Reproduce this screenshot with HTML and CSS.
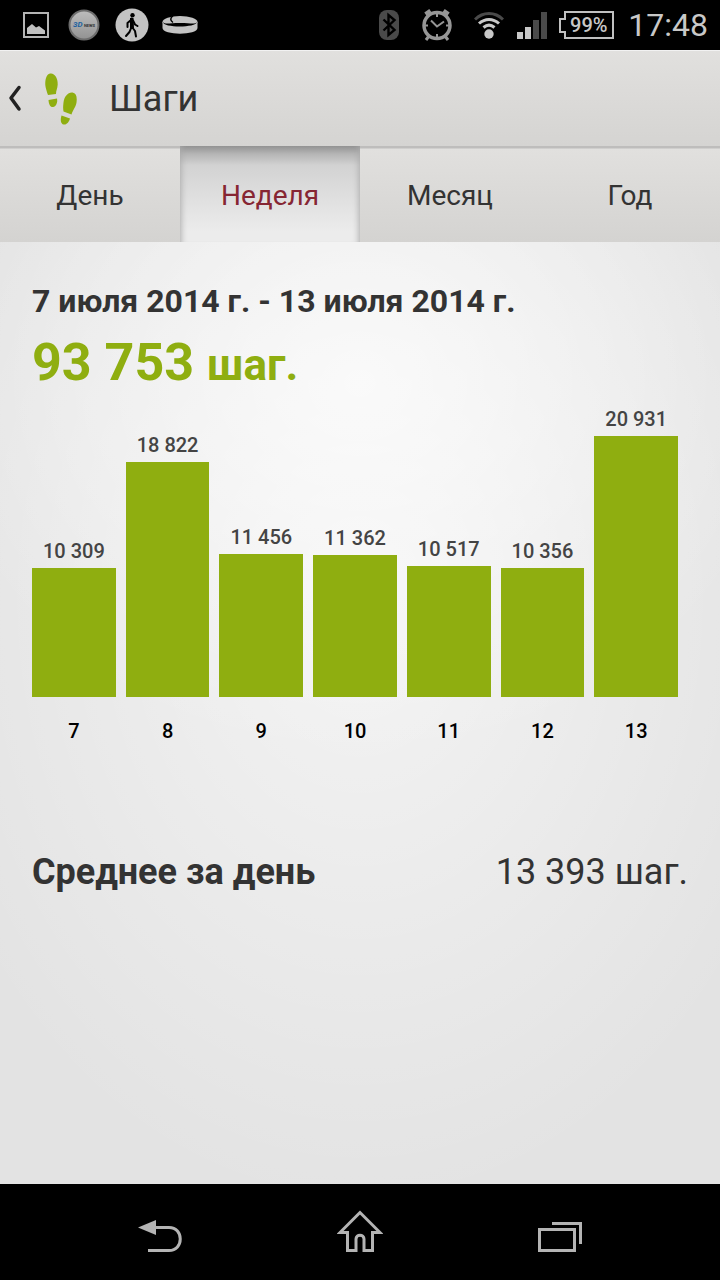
FILE: index.html
```html
<!DOCTYPE html>
<html lang="ru">
<head>
  <meta charset="UTF-8" />
  <meta name="viewport" content="width=device-width, initial-scale=1.0" />
  <title>Шаги</title>
  <link rel="stylesheet" href="styles.css">
</head>
<body>

  <div class="status-bar">
    <div class="status-icons">
      <span class="status-cell">
        <svg width="26" height="26" viewBox="0 0 26 26">
          <rect x="1" y="1" width="24" height="24" fill="none" stroke="#b4b4b4" stroke-width="2"/>
          <path d="M4 22v-6l5-4 4 3.500 3-1.500 6 4.500V22z" fill="#c0c0c0"/>
        </svg>
      </span>
      <span class="status-cell">
        <svg width="32" height="32" viewBox="0 0 32 32">
          <defs>
            <linearGradient id="disc" x1="0" y1="0" x2="0" y2="1">
              <stop offset="0" stop-color="#bdbdbd"/>
              <stop offset="1" stop-color="#929292"/>
            </linearGradient>
          </defs>
          <circle cx="16" cy="16" r="14.500" fill="url(#disc)" stroke="#6d6d6d" stroke-width="2"/>
          <text x="5" y="18" class="disc-mark">3D</text>
          <text x="16" y="18" class="disc-sub">NEWS</text>
        </svg>
      </span>
      <span class="status-cell">
        <svg width="34" height="34" viewBox="0 0 34 34">
          <circle cx="17" cy="17" r="16.500" fill="#c3c3c3"/>
          <circle cx="17.500" cy="7.200" r="2.200"/>
          <path d="M16.500 10.500l-.5 8.500M16 12l-3.500 3v4M18 12.500l2 4 2.500 1.500M16.500 19l-2 5-3.500 4M17 19l3 4 1 5.500" fill="none" stroke="#000" stroke-width="2" stroke-linecap="round" stroke-linejoin="round"/>
          <path d="M15 10h3.500l.5 10h-4z"/>
        </svg>
      </span>
      <span class="status-cell">
        <svg width="36" height="20" viewBox="0 0 36 20">
          <path d="M.5 7v6c0 7.500 35 7.500 35 0V7z" fill="#c3c3c3"/>
          <ellipse cx="18" cy="7" rx="17.500" ry="6" fill="#c3c3c3"/>
          <path d="M1 7c2 2.500 6 1 17 1s15 1.500 17-1c-1 6-34 6-34 0z"/>
          <path d="M11 1c-3 2-3 4.500 0 6.500" fill="none" stroke="#000" stroke-width="1.500"/>
        </svg>
      </span>
    </div>

    <div class="status-icons">
      <span class="status-cell">
        <svg width="20" height="30" viewBox="0 0 20 30">
          <rect width="20" height="30" rx="8" fill="#4a4a4a"/>
          <path d="M4.500 9.500l11 10.500-6 5V5l6 5L4.500 20.500" fill="none" stroke="#000" stroke-width="2.400"/>
        </svg>
      </span>
      <span class="status-cell">
        <svg width="30" height="34" viewBox="0 0 30 34">
          <g fill="none" stroke="#969696">
            <path d="M4 7L9 3.500M26 7L21 3.500" stroke-width="6"/>
            <path d="M7 28l-3 4M23 28l3 4" stroke-width="3"/>
            <circle cx="15" cy="17.500" r="13" fill="#000" stroke-width="3.500"/>
            <path d="M9 12.500l6 6 7-5" stroke-width="2"/>
            <path d="M15 6v3M15 26v3M3 17.500h3M24 17.500h3" stroke-width="2"/>
          </g>
        </svg>
      </span>
      <span class="status-cell wifi">
        <svg width="30" height="28" viewBox="0 0 30 28">
          <circle cx="15" cy="23" r="4.700" fill="#c8c8c8"/>
          <path d="M1 8.500C9 .5 21 .5 29 8.500" fill="none" stroke="#4a4a4a" stroke-width="3"/>
          <path d="M5 12.500c6-5.500 14-5.500 20 0M9.500 16.500c3.500-3 7.500-3 11 0" fill="none" stroke="#c8c8c8" stroke-width="3"/>
        </svg>
      </span>
      <svg width="30" height="27" viewBox="0 0 30 27">
        <path d="M0 20h6v7H0zM8 15h6v12H8z" fill="#c8c8c8"/>
        <path d="M16 8h6v19h-6zM24 0h6v27h-6z" fill="#4a4a4a"/>
      </svg>
      <div class="battery">
        <svg width="55" height="28" viewBox="0 0 55 28">
          <path d="M6 1h48v26H6v-6H1V8h5z" fill="none" stroke="#c0c0c0" stroke-width="2"/>
        </svg>
        <span class="battery-level">99%</span>
      </div>
      <time class="clock">17:48</time>
    </div>
  </div>

  <header class="app-bar">
    <a href="#" class="up" aria-label="Назад">
      <svg width="14" height="28" viewBox="0 0 14 28">
        <path d="M11 2.500L3 13l8 11" fill="none" stroke="#222" stroke-width="3.500" stroke-linecap="round" stroke-linejoin="round"/>
      </svg>
      <svg width="32" height="52" viewBox="0 0 32 52" fill="#8fae10">
        <path d="M3 22C1 16 0 13 .3 9 .8 3 3 .5 6 .5c4 0 7 5 6.700 11-.2 4-1.700 6-1.700 9.500z"/>
        <path d="M3.500 27l8.500-1.500c.8 4-.8 8-4 8.500-2.800.3-4.200-2.500-4.500-7z"/>
        <path d="M18.500 38.500c-.5-3-.5-5 0-9 .7-6 4.500-10.500 9-10 3.500.5 4.800 4 4 10-.6 4.500-3.500 7-5 12z"/>
        <path d="M16.500 42.500l8.500 3c-1 4-4 6.500-6.500 6s-3.500-4-2-9z"/>
      </svg>
    </a>
    <h1>Шаги</h1>
  </header>

  <nav class="tabs">
    <button class="tab">День</button>
    <button class="tab active">Неделя</button>
    <button class="tab">Месяц</button>
    <button class="tab">Год</button>
  </nav>

  <main class="content">
    <h2 class="period">7 июля 2014 г. - 13 июля 2014 г.</h2>
    <p class="total">93 753 <span class="unit">шаг.</span></p>

    <div class="chart">
      <div class="day"><span class="value">10 309</span><div class="bar" style="--steps: 10309"></div><span class="date">7</span></div>
      <div class="day"><span class="value">18 822</span><div class="bar" style="--steps: 18822"></div><span class="date">8</span></div>
      <div class="day"><span class="value">11 456</span><div class="bar" style="--steps: 11456"></div><span class="date">9</span></div>
      <div class="day"><span class="value">11 362</span><div class="bar" style="--steps: 11362"></div><span class="date">10</span></div>
      <div class="day"><span class="value">10 517</span><div class="bar" style="--steps: 10517"></div><span class="date">11</span></div>
      <div class="day"><span class="value">10 356</span><div class="bar" style="--steps: 10356"></div><span class="date">12</span></div>
      <div class="day"><span class="value">20 931</span><div class="bar" style="--steps: 20931"></div><span class="date">13</span></div>
    </div>

    <div class="average">
      <strong>Среднее за день</strong>
      <span>13 393 шаг.</span>
    </div>
  </main>

  <div class="nav-bar">
    <button class="nav-btn" aria-label="Назад">
      <svg width="44" height="44" viewBox="0 0 44 44">
        <path d="M0 17.500L18 10v15z" fill="#b4b4b4"/>
        <path d="M17 17.500h14c15 0 15 23 0 23H10" fill="none" stroke="#b4b4b4" stroke-width="3"/>
      </svg>
    </button>
    <button class="nav-btn" aria-label="Домой">
      <svg width="46" height="44" viewBox="0 0 46 44">
        <path d="M23 2.500L3 22.500h7.500v18H19V29c0-5 8-5 8 0v11.500h8.500v-18H43z" fill="none" stroke="#b4b4b4" stroke-width="3"/>
      </svg>
    </button>
    <button class="nav-btn" aria-label="Недавние">
      <svg width="44" height="44" viewBox="0 0 44 44">
        <rect x="1.500" y="19.500" width="35" height="21" fill="none" stroke="#b4b4b4" stroke-width="3"/>
        <path d="M14 13.500h28.500V34" fill="none" stroke="#b4b4b4" stroke-width="3"/>
      </svg>
    </button>
  </div>

</body>
</html>
```
FILE: styles.css
```css
* {
  box-sizing: border-box;
}

body {
  display: flex;
  flex-direction: column;
  min-height: 100vh;
  margin: 0;
  font-family: Roboto, "Noto Sans", sans-serif;
  color: #333;
  background: #000;
}

h1, h2, p {
  margin: 0;
}

button {
  border: none;
  padding: 0;
  background: none;
  font-family: inherit;
  color: inherit;
  cursor: pointer;
}

svg {
  display: block;
}

/* Status bar */
.status-bar {
  display: flex;
  justify-content: space-between;
  height: 50px;
  padding: 0 12px;
  color: #c8c8c8;
}

.status-icons {
  display: flex;
  align-items: center;
}

.status-cell {
  display: flex;
  justify-content: center;
  width: 48px;
}

.wifi {
  width: 56px;
}

.disc-mark {
  font-size: 8px;
  font-weight: bold;
  font-style: italic;
  fill: #1e62a0;
}

.disc-sub {
  font-size: 4px;
  font-weight: bold;
  fill: #333;
}

.battery {
  position: relative;
  margin: 0 14px 0 12px;
}

.battery-level {
  position: absolute;
  inset: 0 0 0 4px;
  font-size: 20px;
  font-weight: 500;
  line-height: 28px;
  text-align: center;
}

.clock {
  font-size: 32px;
}

/* Title bar */
.app-bar {
  display: flex;
  align-items: center;
  height: 96px;
  padding: 0 8px;
  background: linear-gradient(#e1e0de, #d5d4d2);
  border-top: 1px solid #f2f2f2;
}

.up {
  display: flex;
  align-items: center;
  gap: 23px;
}

.app-bar h1 {
  margin-left: 32px;
  font-size: 36px;
  font-weight: 400;
}

/* Tabs */
.tabs {
  display: grid;
  grid-template-columns: repeat(4, 1fr);
  height: 96px;
  background: linear-gradient(#bebdbc 2px, #e1e0de 3px, #d4d3d1);
}

.tab {
  padding-top: 2px;
  font-size: 28px;
}

.tab.active {
  color: #862633;
  background: linear-gradient(#929292, #b4b4b4 8%, #d2d2d2 20%, #dcdcdc 45%, #ececec 90%);
  box-shadow: inset 7px 0 6px -6px #aaa, inset -7px 0 6px -6px #aaa;
}

/* Content */
.content {
  flex: 1;
  padding: 40px 32px;
  background:
    radial-gradient(ellipse 60% 40% at 50% 15%, rgba(255, 255, 255, .7), rgba(255, 255, 255, 0)),
    radial-gradient(ellipse 65% 65% at 50% 38%, rgba(255, 255, 255, .6), rgba(255, 255, 255, 0)),
    #e3e3e3;
}

.period {
  font-size: 32px;
  line-height: 38px;
}

.total {
  font-size: 52px;
  font-weight: bold;
  line-height: 86px;
  color: #8fae10;
}

.unit {
  font-size: 44px;
}

.chart {
  display: flex;
  align-items: flex-end;
  gap: 10px;
  height: 337px;
  margin-right: 10px;
}

.day {
  flex: 1;
  text-align: center;
  font-size: 20px;
  font-weight: 500;
}

.value {
  display: block;
  line-height: 34px;
  color: #444;
}

.bar {
  height: calc(var(--steps) / 20931 * 261px);
  background: #8fae10;
}

.date {
  display: block;
  margin-top: 20px;
  line-height: 28px;
  color: #000;
}

.average {
  display: flex;
  justify-content: space-between;
  margin-top: 103px;
  font-size: 36px;
  line-height: 48px;
}

/* System buttons */
.nav-bar {
  display: flex;
  justify-content: center;
  gap: 155px;
  height: 96px;
}

.nav-btn {
  display: flex;
  align-items: center;
}
```
